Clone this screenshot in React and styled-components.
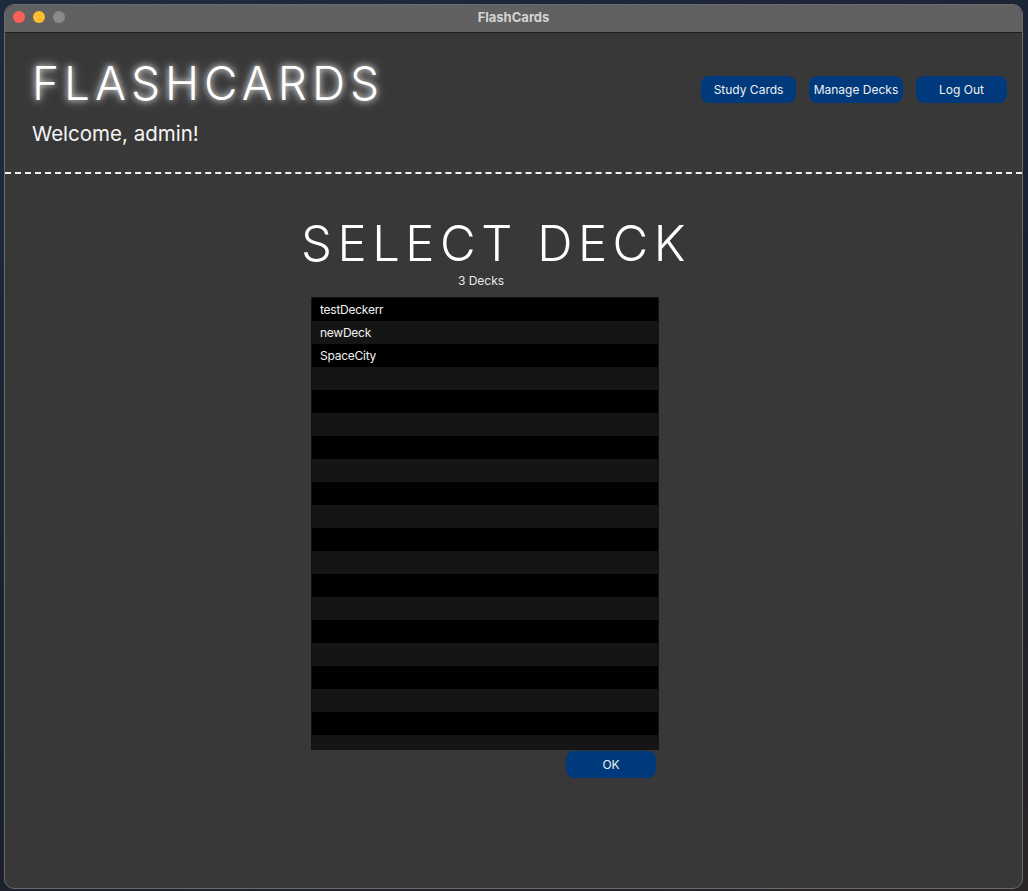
import styled, { createGlobalStyle } from 'styled-components'

const GlobalStyle = createGlobalStyle`
  html, body {
    margin: 0;
    padding: 0;
    background: #1c2535;
    font-family: Inter, "Noto Sans", "Liberation Sans", sans-serif;
  }
`

const Desktop = styled.div`
  width: 1028px;
  height: 891px;
  padding: 4px 5px 4px 4px;
  box-sizing: border-box;
  background: linear-gradient(160deg, #1f2a3e 0%, #18202f 60%, #2a2426 100%);
`

const Window = styled.div`
  height: 100%;
  display: flex;
  flex-direction: column;
  border-radius: 10px;
  border: 1px solid #6a6a6a;
  overflow: hidden;
  background: #383838;
`

const TitleBar = styled.div`
  position: relative;
  height: 28px;
  padding-bottom: 3px;
  box-sizing: border-box;
  flex-shrink: 0;
  display: flex;
  align-items: center;
  justify-content: center;
  background: #616161;
  border-bottom: 1px solid #1e1e1e;
`

const Lights = styled.div`
  position: absolute;
  left: 8px;
  top: 6px;
  display: flex;
  gap: 8px;
`

const Light = styled.span`
  width: 12px;
  height: 12px;
  border-radius: 50%;
  background: ${p => p.$color};
`

const WindowTitle = styled.div`
  color: #d4d4d4;
  font-size: 13px;
  font-weight: 700;
`

const Header = styled.header`
  display: flex;
  justify-content: space-between;
  align-items: flex-start;
  padding: 22px 15px 0 27px;
  height: 141px;
  flex-shrink: 0;
  box-sizing: border-box;
  border-bottom: 2px dashed #f2f2f2;
`

const Brand = styled.div`
  display: flex;
  flex-direction: column;
`

const Logo = styled.h1`
  margin: 0;
  color: #fff;
  font-size: 46px;
  font-weight: 300;
  letter-spacing: 5px;
  line-height: 56px;
  text-shadow: 0 0 6px rgba(255, 255, 255, 0.9), 0 0 12px rgba(255, 255, 255, 0.5);
`

const Welcome = styled.div`
  margin-top: 10px;
  color: #f4f4f4;
  font-size: 20.5px;
`

const Nav = styled.nav`
  display: flex;
  gap: 13px;
  margin-top: 21px;
`

const PillButton = styled.button`
  width: ${p => p.$w}px;
  height: 27px;
  padding: 0;
  border: none;
  border-radius: 8px;
  background: #003a7c;
  color: #f0f0f0;
  font-family: inherit;
  font-size: 12px;
  white-space: nowrap;
  cursor: pointer;
`

const Main = styled.main`
  display: flex;
  flex-direction: column;
  align-items: center;
  margin-right: 57px;
`

const Heading = styled.h2`
  margin: 40px 0 0 22px;
  color: #fff;
  font-size: 49px;
  font-weight: 300;
  letter-spacing: 5.5px;
  line-height: 60px;
`

const Count = styled.div`
  margin: -1px 8px 0 0;
  color: #e8e8e8;
  font-size: 12px;
  line-height: 16px;
`

const List = styled.ul`
  list-style: none;
  margin: 8px 0 0;
  padding: 0;
  width: 348px;
  height: 453px;
  overflow: hidden;
  border: 1px solid #141414;
  box-sizing: border-box;
`

const Row = styled.li`
  height: 23px;
  line-height: 23px;
  padding-left: 8px;
  color: #f2f2f2;
  font-size: 12px;
  letter-spacing: -0.25px;
  background: ${p => (p.$odd ? '#151515' : '#000')};
`

const Footer = styled.div`
  width: 348px;
  display: flex;
  justify-content: flex-end;
  padding-right: 3px;
  box-sizing: border-box;
  margin-top: 1px;
`

const decks = ['testDeckerr', 'newDeck', 'SpaceCity']

export default function App() {
  const rows = Array.from({ length: 20 }, (_, i) => decks[i] || '')

  return (
    <>
      <GlobalStyle />
      <Desktop>
        <Window>
          <TitleBar>
            <Lights>
              <Light $color="#fe5f57" />
              <Light $color="#febc2e" />
              <Light $color="#8a8a8a" />
            </Lights>
            <WindowTitle>FlashCards</WindowTitle>
          </TitleBar>
          <Header>
            <Brand>
              <Logo>FLASHCARDS</Logo>
              <Welcome>Welcome, admin!</Welcome>
            </Brand>
            <Nav>
              <PillButton $w={95}>Study Cards</PillButton>
              <PillButton $w={94}>Manage Decks</PillButton>
              <PillButton $w={91}>Log Out</PillButton>
            </Nav>
          </Header>
          <Main>
            <Heading>SELECT DECK</Heading>
            <Count>3 Decks</Count>
            <List>
              {rows.map((name, i) => (
                <Row key={i} $odd={i % 2 === 1}>{name}</Row>
              ))}
            </List>
            <Footer>
              <PillButton $w={90}>OK</PillButton>
            </Footer>
          </Main>
        </Window>
      </Desktop>
    </>
  )
}
